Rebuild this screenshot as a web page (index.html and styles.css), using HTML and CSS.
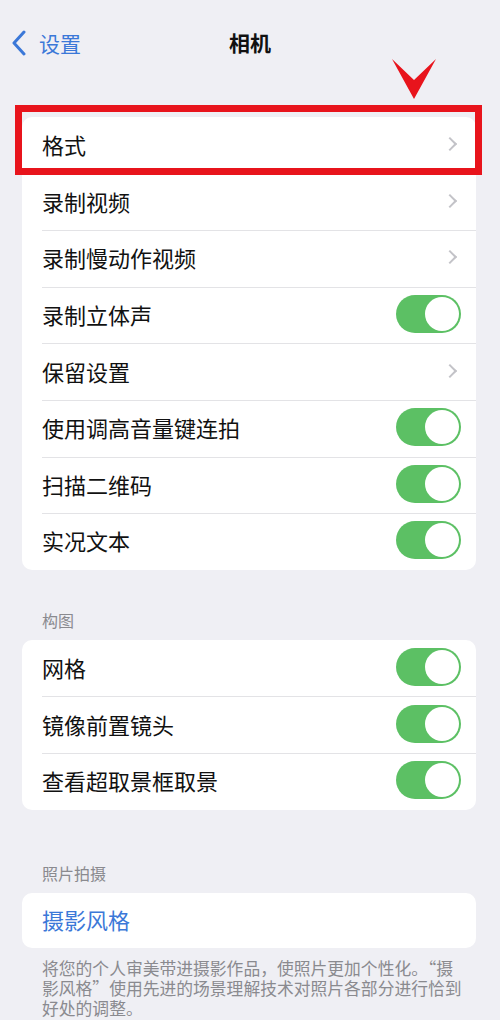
FILE: index.html
```html
<!DOCTYPE html>
<html>
<head>
<meta charset="utf-8"/>
<title>相机</title>
<link rel="stylesheet" href="styles.css">
</head>
<body>
<div class="nav">
  <a class="back">
    <svg width="16" height="26" viewBox="0 0 16 26"><path d="M13 2 L3 13 L13 24" fill="none" stroke="#3b78d8" stroke-width="3" stroke-linecap="round" stroke-linejoin="round"/></svg>
    <span>设置</span>
  </a>
  <div class="title">相机</div>
</div>

<div class="group first">
  <svg class="mark-arrow" width="46" height="42" viewBox="0 0 46 42"><path d="M1 1 L23 41 L45 1 L23 22 Z" fill="#e8141c"/></svg>
  <div class="mark-box"></div>
  <div class="card">
    <div class="row"><div class="cell"><span class="label">格式</span><i class="chev"></i></div></div>
    <div class="row"><div class="cell"><span class="label">录制视频</span><i class="chev"></i></div></div>
    <div class="row"><div class="cell"><span class="label">录制慢动作视频</span><i class="chev"></i></div></div>
    <div class="row"><div class="cell"><span class="label">录制立体声</span><span class="toggle"></span></div></div>
    <div class="row"><div class="cell"><span class="label">保留设置</span><i class="chev"></i></div></div>
    <div class="row"><div class="cell"><span class="label">使用调高音量键连拍</span><span class="toggle"></span></div></div>
    <div class="row"><div class="cell"><span class="label">扫描二维码</span><span class="toggle"></span></div></div>
    <div class="row"><div class="cell"><span class="label">实况文本</span><span class="toggle"></span></div></div>
  </div>
</div>

<div class="group">
  <div class="section-title">构图</div>
  <div class="card">
    <div class="row"><div class="cell"><span class="label">网格</span><span class="toggle"></span></div></div>
    <div class="row"><div class="cell"><span class="label">镜像前置镜头</span><span class="toggle"></span></div></div>
    <div class="row"><div class="cell"><span class="label">查看超取景框取景</span><span class="toggle"></span></div></div>
  </div>
</div>

<div class="group">
  <div class="section-title wide">照片拍摄</div>
  <div class="card">
    <div class="row short"><div class="cell"><span class="label link">摄影风格</span></div></div>
  </div>
  <p class="note">将您的个人审美带进摄影作品，使照片更加个性化。“摄影风格”使用先进的场景理解技术对照片各部分进行恰到好处的调整。</p>
</div>
</body>
</html>
```

FILE: styles.css
```css
body {
  margin: 0;
  background-color: #efeff4;
  font-family: "Noto Sans CJK SC", "Noto Sans", sans-serif;
  color: #111;
  width: 500px;
  height: 1020px;
  overflow: hidden;
}

.nav {
  position: relative;
  height: 88px;
}

.back {
  position: absolute;
  left: 11px;
  top: 30px;
  display: flex;
  align-items: center;
  gap: 12px;
  color: #3b78d8;
  font-size: 21px;
  line-height: 26px;
}

.title {
  text-align: center;
  padding-top: 28px;
  font-size: 21px;
  font-weight: bold;
  line-height: 28px;
}

.group {
  position: relative;
}

.group.first {
  padding-top: 29px;
}

.mark-arrow {
  position: absolute;
  left: 391px;
  top: -30px;
}

.mark-box {
  position: absolute;
  left: 15px;
  top: 17px;
  width: 453px;
  height: 56px;
  border: 7px solid #e8141c;
  z-index: 2;
}

.card {
  background-color: #fff;
  margin: 0 24px 0 22px;
  border-radius: 10px;
}

.row {
  padding-left: 20px;
  height: 56.6px;
}

.row.short {
  height: 55px;
}

.cell {
  height: 100%;
  display: flex;
  align-items: center;
  justify-content: space-between;
  padding-right: 15px;
  padding-bottom: 3px;
  border-top: 1px solid #e3e3e6;
  box-sizing: border-box;
}

.row:first-child .cell {
  border-top: none;
}

.label {
  font-size: 22px;
  line-height: 30px;
}

.label.link {
  color: #3b78d8;
}

.chev {
  width: 8px;
  height: 8px;
  border-top: 2px solid #c3c3c8;
  border-right: 2px solid #c3c3c8;
  transform: rotate(45deg);
  margin-right: 6px;
}

.toggle {
  position: relative;
  width: 65px;
  height: 38px;
  border-radius: 19px;
  background-color: #5cc064;
}

.toggle::after {
  content: "";
  position: absolute;
  right: 2px;
  top: 2px;
  width: 34px;
  height: 34px;
  border-radius: 50%;
  background-color: #fff;
}

.section-title {
  color: #8a8a8f;
  font-size: 16px;
  line-height: 22px;
  padding: 39px 0 9px 42px;
}

.section-title.wide {
  padding-top: 52px;
}

.note {
  margin: 10px 0 0 42px;
  width: 424px;
  color: #8a8a8f;
  font-size: 16.8px;
  line-height: 20px;
}
```
